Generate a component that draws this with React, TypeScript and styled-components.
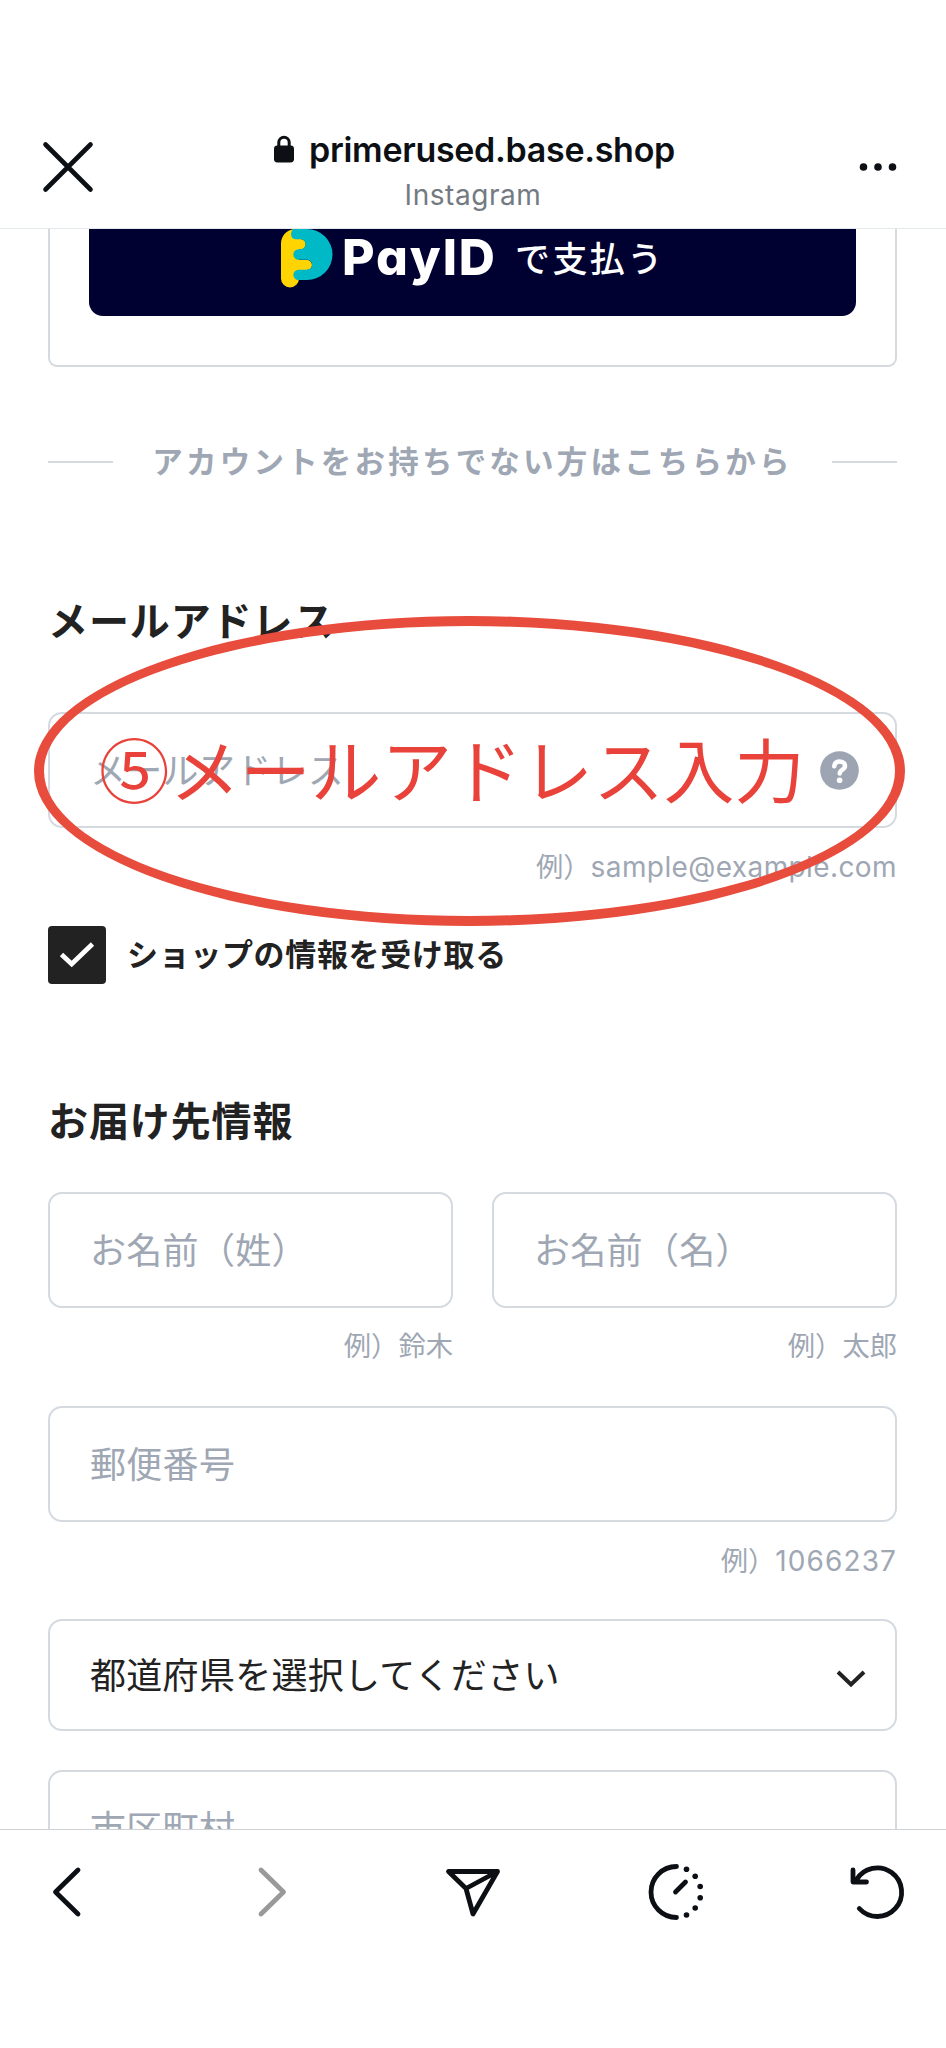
import React from "react";
import styled, { createGlobalStyle } from "styled-components";

const GlobalStyle = createGlobalStyle`
  * { box-sizing: border-box; }
  body { margin: 0; background: #fff; }
  button { border: 0; background: none; padding: 0; margin: 0; font: inherit; color: inherit; }
`;

const line = "#d4dae0";
const muted = "#9ea7b3";
const ink = "#222222";

const Screen = styled.div`
  position: relative;
  display: flex;
  flex-direction: column;
  width: 946px;
  height: 2048px;
  overflow: hidden;
  background: #fff;
  color: ${ink};
  font-family: Inter, "Noto Sans CJK JP", sans-serif;
`;

const Header = styled.header`
  flex: none;
  display: grid;
  grid-template-columns: 136px 1fr 136px;
  height: 229px;
  padding-top: 106px;
  border-bottom: 1px solid #e4e9ec;
`;

const HeaderButton = styled.button`
  display: flex;
  align-items: center;
  justify-content: center;
  height: 122px;
`;

const TitleBlock = styled.div`
  display: flex;
  flex-direction: column;
  align-items: center;
  padding-top: 22px;
`;

const SiteName = styled.div`
  display: flex;
  align-items: center;
  gap: 14px;
  height: 42px;
  padding-left: 2px;
  color: #0c1014;
  font-size: 34px;
  font-weight: 600;
  white-space: nowrap;
`;

const SiteText = styled.span`
  letter-spacing: -0.3px;
`;

const Source = styled.div`
  height: 50px;
  line-height: 50px;
  color: #737a82;
  font-size: 28px;
  letter-spacing: 0.55px;
`;

const Content = styled.main`
  flex: 1;
  min-height: 0;
  overflow: hidden;
  padding: 0 49px 0 48px;
`;

const LoginCard = styled.section`
  height: 138px;
  padding: 0 39px;
  border: 2px solid ${line};
  border-top: 0;
  border-radius: 0 0 9px 9px;
`;

const PayButton = styled.button`
  display: flex;
  align-items: flex-start;
  width: 100%;
  height: 87px;
  padding-left: 192px;
  border-radius: 0 0 14px 14px;
  background: #000031;
  color: #fff;
`;

const PayName = styled.span`
  width: 153px;
  margin-left: 9px;
  font-size: 50px;
  font-weight: 800;
  font-feature-settings: "cv11";
  line-height: 56px;
  text-align: left;
  letter-spacing: 1.9px;
`;

const PayLabel = styled.span`
  margin-left: 20px;
  padding-top: 4px;
  font-size: 35px;
  font-weight: 500;
  line-height: 52px;
  letter-spacing: 2.4px;
  white-space: nowrap;
`;

const Divider = styled.div`
  display: flex;
  align-items: center;
  justify-content: space-between;
  height: 40px;
  margin-top: 75px;
  color: ${muted};
  font-size: 30.5px;
  font-weight: 700;
  letter-spacing: 3.2px;
  white-space: nowrap;
  &::before, &::after {
    content: "";
    width: 65px;
    height: 2px;
    background: ${line};
  }
`;

const DividerText = styled.span`
  margin-bottom: 4px;
`;

const Heading = styled.h2<{ $top: number; $gap: number }>`
  height: 60px;
  margin: ${(p) => p.$top}px 0 ${(p) => p.$gap}px;
  font-size: 40px;
  font-weight: 700;
  line-height: 60px;
  letter-spacing: 0.9px;
`;

const Field = styled.div<{ $height?: number; $dark?: boolean; $end?: number }>`
  display: flex;
  align-items: center;
  justify-content: space-between;
  height: ${(p) => p.$height ?? 116}px;
  padding: 0 ${(p) => p.$end ?? 36}px 0 40px;
  border: 2px solid ${line};
  border-radius: 14px;
  color: ${(p) => (p.$dark ? ink : muted)};
  font-size: 36px;
  letter-spacing: 0.3px;
  white-space: nowrap;
`;

const FieldText = styled.span`
  margin-bottom: 4px;
`;

const Hint = styled.div<{ $height?: number }>`
  height: ${(p) => p.$height ?? 98}px;
  padding-top: 19px;
  color: ${muted};
  font-size: 27.3px;
  line-height: 40px;
  text-align: right;
  white-space: nowrap;
`;

const HintLatin = styled.span<{ $spacing: number }>`
  font-size: 28px;
  letter-spacing: ${(p) => p.$spacing}px;
`;

const CheckRow = styled.label`
  display: flex;
  align-items: center;
  gap: 21px;
  height: 58px;
  font-size: 31px;
  font-weight: 700;
  letter-spacing: 0.65px;
`;

const CheckText = styled.span`
  margin-bottom: 6px;
`;

const CheckBox = styled.span`
  display: flex;
  align-items: center;
  justify-content: center;
  width: 58px;
  height: 58px;
  border-radius: 4px;
  background: ${ink};
`;

const NameRow = styled.div`
  display: grid;
  grid-template-columns: 1fr 1fr;
  gap: 39px;
`;

const Gap = styled.div`
  height: 39px;
`;

const BottomBar = styled.nav`
  flex: none;
  display: flex;
  justify-content: space-between;
  height: 219px;
  padding: 30px 37px 0;
  border-top: 1px solid #cfd2d5;
  background: #fff;
`;

const BarButton = styled.button`
  width: 64px;
  height: 64px;
`;

const Annotation = styled.div`
  position: absolute;
  left: 34px;
  top: 616px;
  display: flex;
  align-items: center;
  width: 871px;
  height: 310px;
  padding: 0 0 8px 55px;
  border: 10px solid #e74c3c;
  border-radius: 50%;
  color: #e8423a;
  font-family: "Noto Sans CJK JP", sans-serif;
  font-size: 70.6px;
  line-height: 100px;
  white-space: nowrap;
  pointer-events: none;
`;

const CloseIcon = () => (
  <svg width="54" height="54" viewBox="0 0 54 54" fill="none" stroke="#0c1014" strokeWidth="4.6" strokeLinecap="round">
    <path d="M4.5 4.5 49.5 49.5M49.5 4.5 4.5 49.5" />
  </svg>
);

const LockIcon = () => (
  <svg width="22" height="28" viewBox="0 0 22 28">
    <path d="M5.8 12V7.5a5.2 5.2 0 0 1 10.4 0V12" fill="none" stroke="#0c1014" strokeWidth="3" />
    <rect x="1" y="10.5" width="20" height="17" rx="3.4" fill="#0c1014" />
  </svg>
);

const MoreIcon = () => (
  <svg width="40" height="12" viewBox="0 0 40 12" fill="#0c1014">
    <circle cx="5.5" cy="6" r="3.800" />
    <circle cx="20" cy="6" r="3.800" />
    <circle cx="34.5" cy="6" r="3.800" />
  </svg>
);

const PayMark = () => (
  <svg width="52" height="60" viewBox="0 0 52 60">
    <path
      d="M13 0C5 1.500 0 7 0 15V49.500a9 9 0 0 0 18 0V41H26a5 5 0 0 0 0-10H18V20.500H19.500a5 5 0 0 0 0-10.500H14Z"
      fill="#ffd400"
    />
    <path
      d="M12.500 0H26A25.500 25.500 0 0 1 26 51H17.500a5 5 0 0 1 0-10.300H26a5 5 0 0 0 0-10H17.500a5 5 0 0 1 0-10.400H19.500a5 5 0 0 0 0-10H14.500C9.500 10 8.500 3.500 12.500 0Z"
      fill="#00b9c6"
    />
  </svg>
);

const HelpIcon = () => (
  <svg width="39" height="39" viewBox="0 0 39 39" fill="none">
    <circle cx="19.500" cy="19.500" r="19.300" fill="#9da5b2" />
    <path
      d="M14.300 15.200c.4-3 2.500-4.600 5.300-4.600 3.200 0 5.400 1.700 5.400 4.400 0 3.800-5.300 3.700-5.300 7.500"
      stroke="#fff"
      strokeWidth="4.500"
      strokeLinecap="round"
    />
    <circle cx="19.600" cy="29.200" r="2.800" fill="#fff" />
  </svg>
);

const CheckIcon = () => (
  <svg width="36" height="28" viewBox="0 0 36 28" fill="none" stroke="#fff" strokeWidth="4.800">
    <path d="M2.500 13.500 12.700 23 33.500 3" />
  </svg>
);

const DownIcon = () => (
  <svg width="30" height="26" viewBox="0 0 30 26" fill="none" stroke={ink} strokeWidth="4">
    <path d="M2 10 15 22.500 28 10" />
  </svg>
);

const barIcons = {
  back: <path d="M41 10 18.500 32 41 54" />,
  forward: <path d="M22 10 44.500 32 22 54" stroke="#999" />,
  send: <path d="M7.500 11.500H56.500L32 54 25 28.500ZM25 28.500 56.500 11.500" />,
  timer: (
    <>
      <path d="M33.500 6.500a25.500 25.500 0 0 0 0 51M32.500 32l10-10" />
      <g fill="#0c1014" stroke="none">
        <circle cx="43.500" cy="9.200" r="2.800" />
        <circle cx="52.200" cy="16.200" r="2.800" />
        <circle cx="57.200" cy="26.500" r="2.800" />
        <circle cx="57.200" cy="37.700" r="2.800" />
        <circle cx="52.200" cy="48" r="2.800" />
        <circle cx="43.500" cy="55" r="2.800" />
      </g>
    </>
  ),
  reload: <path d="M14.300 48.500A24.300 24.300 0 1 0 11.300 20M8 10V22H21.500" />,
};

const BarIcon = ({ name }: { name: keyof typeof barIcons }) => (
  <svg
    width="64"
    height="64"
    viewBox="0 0 64 64"
    fill="none"
    stroke="#0c1014"
    strokeWidth="4.800"
    strokeLinecap="round"
    strokeLinejoin="round"
  >
    {barIcons[name]}
  </svg>
);

export default function App() {
  return (
    <>
      <GlobalStyle />
      <Screen>
        <Header>
          <HeaderButton aria-label="閉じる"><CloseIcon /></HeaderButton>
          <TitleBlock>
            <SiteName>
              <LockIcon />
              <SiteText>primerused.base.shop</SiteText>
            </SiteName>
            <Source>Instagram</Source>
          </TitleBlock>
          <HeaderButton aria-label="メニュー"><MoreIcon /></HeaderButton>
        </Header>

        <Content>
          <LoginCard>
            <PayButton>
              <PayMark />
              <PayName>PayID</PayName>
              <PayLabel>で支払う</PayLabel>
            </PayButton>
          </LoginCard>

          <Divider>
            <DividerText>アカウントをお持ちでない方はこちらから</DividerText>
          </Divider>

          <Heading $top={110} $gap={60}>メールアドレス</Heading>
          <Field>
            <FieldText>メールアドレス</FieldText>
            <HelpIcon />
          </Field>
          <Hint>
            例）<HintLatin $spacing={0.4}>sample@example.com</HintLatin>
          </Hint>

          <CheckRow>
            <CheckBox><CheckIcon /></CheckBox>
            <CheckText>ショップの情報を受け取る</CheckText>
          </CheckRow>

          <Heading $top={108} $gap={40}>お届け先情報</Heading>
          <NameRow>
            <div>
              <Field><FieldText>お名前（姓）</FieldText></Field>
              <Hint>例）鈴木</Hint>
            </div>
            <div>
              <Field><FieldText>お名前（名）</FieldText></Field>
              <Hint>例）太郎</Hint>
            </div>
          </NameRow>
          <Field><FieldText>郵便番号</FieldText></Field>
          <Hint $height={97}>
            例）<HintLatin $spacing={1.1}>1066237</HintLatin>
          </Hint>
          <Field $height={112} $end={29} $dark>
            <FieldText>都道府県を選択してください</FieldText>
            <DownIcon />
          </Field>
          <Gap />
          <Field><FieldText>市区町村</FieldText></Field>
        </Content>

        <BottomBar>
          <BarButton aria-label="戻る"><BarIcon name="back" /></BarButton>
          <BarButton aria-label="進む"><BarIcon name="forward" /></BarButton>
          <BarButton aria-label="送信"><BarIcon name="send" /></BarButton>
          <BarButton aria-label="履歴"><BarIcon name="timer" /></BarButton>
          <BarButton aria-label="再読み込み"><BarIcon name="reload" /></BarButton>
        </BottomBar>

        <Annotation>⑤メールアドレス入力</Annotation>
      </Screen>
    </>
  );
}
